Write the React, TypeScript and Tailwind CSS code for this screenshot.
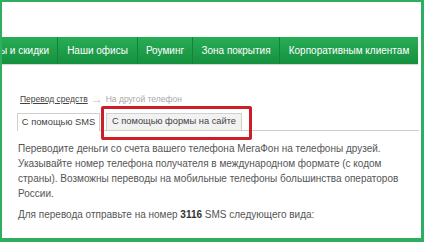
import React from "react";

export default function App() {
  const font = { fontFamily: '"Liberation Sans", Arial, sans-serif' };
  return (
    <div
      className="relative w-[424px] h-[242px] overflow-hidden bg-white border-t-2 border-l-2 border-r-[3px] border-b-4 border-[#2fae5f] flex flex-col"
      style={font}
    >
      <div className="h-[35px] shrink-0" />
      <nav className="h-[27px] w-[416px] shrink-0 flex bg-gradient-to-b from-[#29ad57] to-[#14903e] text-white text-[10px] whitespace-nowrap shadow-[0_1px_1px_rgba(0,0,0,0.15)]">
        <div className="w-[56px] flex items-center justify-end pr-[8px] border-r border-[#11843a]">ы и скидки</div>
        <div className="w-[80px] flex items-center justify-center border-r border-[#11843a]">Наши офисы</div>
        <div className="w-[55px] flex items-center justify-center border-r border-[#11843a]">Роуминг</div>
        <div className="w-[87px] flex items-center justify-center border-r border-[#11843a]">Зона покрытия</div>
        <div className="flex-1 flex items-center justify-center">Корпоративным клиентам</div>
      </nav>
      <div className="pl-[15px] pr-[2px] pt-[29px] flex flex-col">
        <div className="flex items-center h-[12px] pl-[3px] text-[8.5px] leading-[12px] whitespace-nowrap">
          <span className="text-[#444] underline">Перевод средств</span>
          <span className="text-[#c4c4c4] mx-[3px] text-[12px]">→</span>
          <span className="text-[#a8a8a8]">На другой телефон</span>
        </div>
        <div className="mt-[8px] flex items-end border-b border-[#cfcfcf] h-[18px] text-[9.3px] text-[#444] whitespace-nowrap">
          <div className="h-[18px] w-[83px] -mb-px bg-white border border-b-0 border-[#cfcfcf] flex items-center justify-center">
            С помощью SMS
          </div>
          <div className="h-[17px] w-[136px] ml-[6px] bg-[#f2f2f2] border border-b-0 border-[#cfcfcf] flex items-center justify-center">
            С помощью формы на сайте
          </div>
        </div>
        <div className="pl-[1px] pt-[10px] text-[10px] leading-[15px] text-[#555] w-[382px]">
          <p>
            Переводите деньги со счета вашего телефона МегаФон на телефоны друзей. Указывайте номер телефона получателя в международном формате (с кодом страны). Возможны переводы на мобильные телефоны большинства операторов России.
          </p>
          <p className="mt-[6px]">
            Для перевода отправьте на номер <b className="text-[#333]">3116</b> SMS следующего вида:
          </p>
        </div>
      </div>
      <div className="absolute left-[99px] top-[104px] w-[151px] h-[34px] border-[3px] border-[#cc1d28] rounded-[2px]" />
    </div>
  );
}
